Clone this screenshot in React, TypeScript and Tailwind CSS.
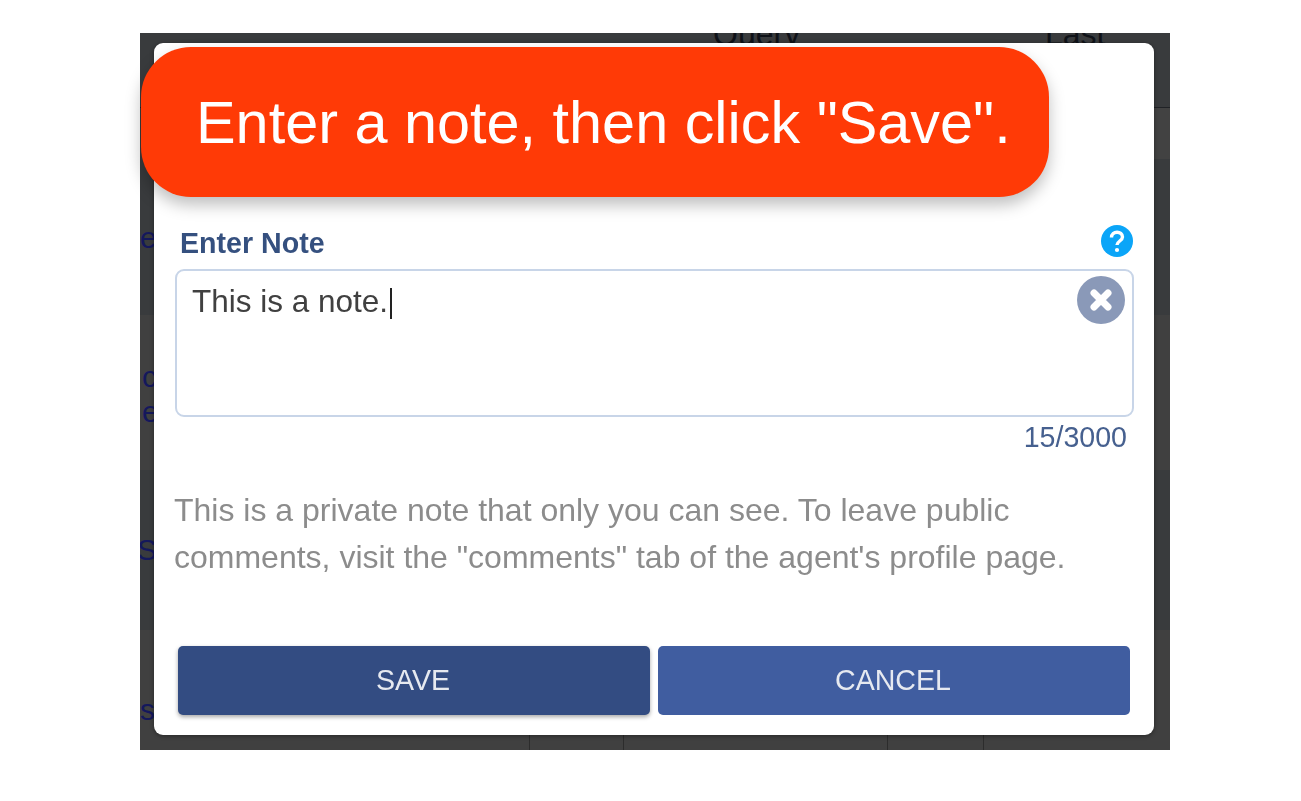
function Backdrop() {
  const cell = "text-[30px] leading-[35px] text-[#14185c]";
  return (
    <div className="absolute inset-0 flex flex-col overflow-hidden">
      <div className="h-[75px] shrink-0 grid grid-cols-[573px_332px_1fr] bg-[#393b3d] border-b border-[#202226] text-[32px] leading-[36px] text-[#0f1218]">
        <span />
        <span className="-mt-[17px]">Query</span>
        <span className="-mt-[17px]">Last</span>
      </div>
      <div className="h-[207px] shrink-0 bg-[#393b3d] pt-[112px] flex">
        <div className={cell}>e</div>
        <div className="ml-auto w-[16px] -mt-[112px] h-[51px] bg-[#424242]" />
      </div>
      <div className="h-[155px] shrink-0 pt-[44px] pl-[2px] flex flex-col">
        <span className={cell}>c</span>
        <span className={cell}>e</span>
      </div>
      <div className="h-[160px] shrink-0 bg-[#393b3d] pt-[62px]">
        <span className="text-[30px] leading-[35px] text-[#14185c] -ml-[3px] inline-block">S</span>
      </div>
      <div className="flex-1 grid grid-cols-[389px_94px_264px_96px_1fr]">
        <div className="pt-[62px]"><span className={cell}>s</span></div>
        <div className="border-l border-[#2c2c2c]" />
        <div className="border-l border-[#2c2c2c]" />
        <div className="border-l border-[#2c2c2c]" />
        <div className="border-l border-[#2c2c2c]" />
      </div>
    </div>
  );
}

export default function App() {
  const font = { fontFamily: '"Liberation Sans", Arial, sans-serif' };
  return (
    <div className="w-[1301px] h-[801px] bg-white pt-[33px] pl-[140px] overflow-hidden relative" style={font}>
      <div className="relative w-[1030px] h-[717px] overflow-hidden bg-[#404040] pt-[10px] pl-[14px]">
        <Backdrop />

        {/* dialog */}
        <div className="relative w-[1000px] h-[692px] bg-white rounded-[9px] shadow-[0_1px_4px_rgba(0,0,0,0.4)] px-[21px] pt-[183px]">
          <div className="flex justify-between items-center h-[32px] pl-[5px] blur-[0.4px]">
            <span className="text-[28.6px] font-bold text-[#35507f] translate-y-[1px]">Enter Note</span>
            <svg className="-translate-y-[1px]" width="32" height="32" viewBox="0 0 32 32">
              <circle cx="16" cy="16" r="16" fill="#0ba5f8" />
              <path d="M10.5 12.5 C10.5 5.5 21.5 5.5 21.5 12 C21.5 16 16 16 16 20" fill="none" stroke="#fff" strokeWidth="3.4" />
              <circle cx="16" cy="25" r="2.1" fill="#fff" />
            </svg>
          </div>
          <div className="relative mt-[11px] w-[959px] h-[148px] border-2 border-[#c8d5e8] rounded-[9px] pl-[15px] pt-[12px] text-[31.5px] leading-[36px] text-[#404040]">
            <span className="blur-[0.4px]">This is a note.</span>
            <span className="inline-block ml-[2px] w-[2px] h-[31px] bg-[#222] align-[-7px]" />
            <svg className="absolute right-[7px] top-[5px] blur-[0.3px]" width="48" height="48" viewBox="0 0 48 48">
              <circle cx="24" cy="24" r="24" fill="#8a99b8" />
              <path d="M17 17 L31 31 M31 17 L17 31" stroke="#fff" strokeWidth="7" strokeLinecap="round" />
            </svg>
          </div>
          <div className="text-right pr-[6px] mt-[2px] text-[28.6px] leading-[36px] text-[#46608f] blur-[0.4px]">15/3000</div>
          <p className="mt-[32px] -ml-[1px] text-[32px] leading-[47px] text-[#8c8c8c] whitespace-nowrap blur-[0.4px]">
            This is a private note that only you can see. To leave public<br />
            comments, visit the "comments" tab of the agent's profile page.
          </p>
          <div className="flex gap-[8px] mt-[65px] pl-[3px]">
            <button className="w-[472px] h-[69px] rounded-[5px] bg-[#334c82] text-[#e6e9f0] text-[28.6px] shadow-[0_2px_4px_rgba(0,0,0,0.35)]"><span className="blur-[0.4px] inline-block -translate-x-[1px]">SAVE</span></button>
            <button className="w-[472px] h-[69px] rounded-[5px] bg-[#405da0] text-[#e6e9f0] text-[28.6px]"><span className="blur-[0.4px] inline-block -translate-x-[1px]">CANCEL</span></button>
          </div>
        </div>
      </div>

      {/* callout */}
      <div className="absolute left-[141px] top-[47px] w-[908px] h-[150px] rounded-[50px] bg-[#ff3a06] shadow-[0_8px_16px_rgba(0,0,0,0.25)] flex items-center pl-[55px] pt-[2px] text-white text-[59.4px] leading-none whitespace-nowrap">
        Enter a note, then click "Save".
      </div>
    </div>
  );
}
